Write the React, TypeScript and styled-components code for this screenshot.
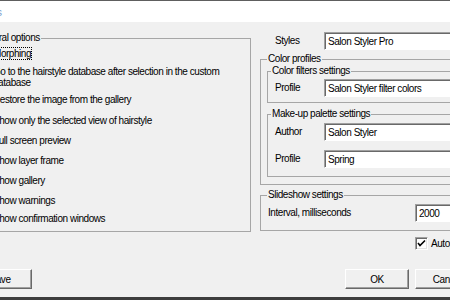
import React from 'react';
import styled, { createGlobalStyle } from 'styled-components';

const Global = createGlobalStyle`
  html, body { margin: 0; padding: 0; }
  body {
    width: 450px;
    height: 300px;
    overflow: hidden;
    background: #f0f0f0;
    font-family: 'Liberation Sans', Arial, sans-serif;
    font-size: 10px;
    letter-spacing: -0.45px;
    color: #000;
  }
`;

const Window = styled.div`
  width: 450px;
  height: 300px;
  display: flex;
  flex-direction: column;
  overflow: hidden;
`;

const TitleBar = styled.div`
  flex: none;
  height: 21px;
  border-top: 1px solid #5e5e5e;
  background: #fff;
  display: flex;
  align-items: center;
  overflow: hidden;
`;

const Title = styled.span`
  margin-left: -36px;
  font-size: 11px;
  letter-spacing: 0;
  color: #7a9fcf;
  white-space: nowrap;
`;

const Client = styled.div`
  flex: 1;
  display: flex;
  flex-direction: column;
  margin-left: -33px;
  width: 520px;
  padding-right: 8px;
  box-sizing: border-box;
`;

const Main = styled.div`
  display: grid;
  grid-template-columns: 284px 1fr;
  column-gap: 9px;
  align-items: start;
`;

const Group = styled.fieldset<{ $mt?: number; $ml?: number; $pb?: number }>`
  margin: ${p => p.$mt ?? 0}px 0 0 ${p => p.$ml ?? 0}px;
  padding: 0 0 ${p => p.$pb ?? 0}px 0;
  border: 1px solid #a6a6a6;
  min-width: 0;
  display: flex;
  flex-direction: column;
`;

const Legend = styled.legend<{ $ml: number }>`
  margin-left: ${p => p.$ml}px;
  padding: 0 1px;
  line-height: 12px;
  white-space: nowrap;
`;

const LeftGroup = styled(Group)`
  margin-top: 10px;
  padding-left: 8px;
`;

const CheckRow = styled.div<{ $mt: number }>`
  display: flex;
  align-items: flex-start;
  gap: 4px;
  margin-top: ${p => p.$mt}px;
`;

const Box = styled.span`
  flex: none;
  width: 13px;
  height: 13px;
  box-sizing: border-box;
  background: #fff;
  border: 1px solid;
  border-color: #a0a0a0 #fff #fff #a0a0a0;
  box-shadow: inset 1px 1px 0 #696969, inset -1px -1px 0 #e3e3e3;
  display: flex;
  align-items: center;
  justify-content: center;
`;

const CheckLabel = styled.span<{ $focus?: boolean }>`
  margin-top: 1px;
  line-height: 11px;
  outline: ${p => (p.$focus ? '1px dotted #000' : 'none')};
  outline-offset: 0;
`;

const RightCol = styled.div`
  display: flex;
  flex-direction: column;
  padding-top: 10px;
`;

const FieldRow = styled.div<{ $mt?: number; $pl: number; $lw: number }>`
  display: flex;
  align-items: center;
  margin-top: ${p => p.$mt ?? 0}px;
  padding-left: ${p => p.$pl}px;
  & > label {
    flex: none;
    width: ${p => p.$lw}px;
    line-height: 12px;
  }
`;

const TextBox = styled.input`
  flex: 1;
  min-width: 0;
  height: 18px;
  box-sizing: border-box;
  margin: 0;
  padding: 0 0 0 3px;
  background: #fff;
  border: 1px solid;
  border-color: #a0a0a0 #fff #fff #a0a0a0;
  box-shadow: inset 1px 1px 0 #696969;
  font: inherit;
  letter-spacing: inherit;
  color: #000;
  outline: none;
`;

const AutoRow = styled.div`
  display: flex;
  align-items: center;
  gap: 3px;
  margin-top: 6px;
  padding-left: 155px;
  white-space: nowrap;
`;

const Footer = styled.div`
  display: flex;
  align-items: center;
  gap: 6px;
  margin-top: 19px;
  padding-left: 1px;
`;

const Button = styled.button<{ $push?: boolean }>`
  flex: none;
  width: 64px;
  height: 20px;
  margin: 0 0 0 ${p => (p.$push ? 'auto' : '0')};
  padding: 0;
  box-sizing: border-box;
  background: #f0f0f0;
  border: 1px solid;
  border-color: #fff #696969 #696969 #fff;
  box-shadow: inset -1px -1px 0 #a0a0a0;
  font: inherit;
  letter-spacing: inherit;
  color: #000;
`;

const BottomEdge = styled.div`
  flex: none;
  height: 3px;
  background: #3d3d3d;
`;

const Check = () => (
  <svg width="9" height="9" viewBox="0 0 9 9">
    <path d="M1 4 L3 6.5 L8 1.5" fill="none" stroke="#000" strokeWidth="1.6" />
  </svg>
);

const options: { text: React.ReactNode; mt: number; focus?: boolean; checked?: boolean }[] = [
  { text: 'Morphing', mt: 3, focus: true, checked: true },
  { text: 'Go to the hairstyle database after selection in the custom database', mt: 5 },
  { text: 'Restore the image from the gallery', mt: 5, checked: true },
  { text: 'Show only the selected view of hairstyle', mt: 8 },
  { text: 'Full screen preview', mt: 7, checked: true },
  { text: 'Show layer frame', mt: 7, checked: true },
  { text: 'Show gallery', mt: 7, checked: true },
  { text: 'Show warnings', mt: 7, checked: true },
  { text: 'Show confirmation windows', mt: 5, checked: true },
];

export default function App() {
  return (
    <>
      <Global />
      <Window>
        <TitleBar>
          <Title>Options</Title>
        </TitleBar>
        <Client>
          <Main>
            <LeftGroup $pb={6}>
              <Legend $ml={-1}>General options</Legend>
              {options.map((o, i) => (
                <CheckRow key={i} $mt={o.mt}>
                  <Box>{o.checked ? <Check /> : null}</Box>
                  <CheckLabel $focus={o.focus}>{o.text}</CheckLabel>
                </CheckRow>
              ))}
            </LeftGroup>

            <RightCol>
              <FieldRow $pl={15} $lw={49}>
                <label>Styles</label>
                <TextBox readOnly defaultValue="Salon Styler Pro" />
              </FieldRow>

              <Group $mt={3} $pb={7}>
                <Legend $ml={6}>Color profiles</Legend>
                <Group $ml={6} $pb={5}>
                  <Legend $ml={3}>Color filters settings</Legend>
                  <FieldRow $mt={2} $pl={7} $lw={49}>
                    <label>Profile</label>
                    <TextBox readOnly defaultValue="Salon Styler filter colors" />
                  </FieldRow>
                </Group>
                <Group $mt={5} $ml={6} $pb={8}>
                  <Legend $ml={3}>Make-up palette settings</Legend>
                  <FieldRow $mt={3} $pl={7} $lw={49}>
                    <label>Author</label>
                    <TextBox readOnly defaultValue="Salon Styler" />
                  </FieldRow>
                  <FieldRow $mt={9} $pl={7} $lw={49}>
                    <label>Profile</label>
                    <TextBox readOnly defaultValue="Spring" />
                  </FieldRow>
                </Group>
              </Group>

              <Group $mt={4} $pb={8}>
                <Legend $ml={6}>Slideshow settings</Legend>
                <FieldRow $mt={3} $pl={7} $lw={147}>
                  <label>Interval, milliseconds</label>
                  <TextBox readOnly defaultValue="2000" />
                </FieldRow>
              </Group>

              <AutoRow>
                <Box>
                  <Check />
                </Box>
                <span>Autoplay</span>
              </AutoRow>
            </RightCol>
          </Main>

          <Footer>
            <Button>Save</Button>
            <Button $push>OK</Button>
            <Button>Cancel</Button>
          </Footer>
        </Client>
        <BottomEdge />
      </Window>
    </>
  );
}
